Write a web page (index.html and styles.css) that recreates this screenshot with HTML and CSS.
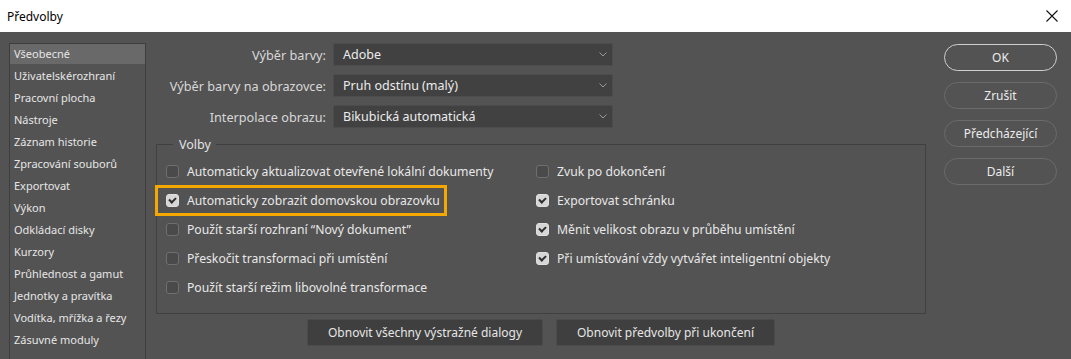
FILE: index.html
```html
<!DOCTYPE html>
<html lang="cs">
<head>
    <meta charset="UTF-8">
    <title>Předvolby</title>
    <link rel="stylesheet" href="styles.css">
</head>
<body>
    <header class="titlebar">
        <span class="title">Předvolby</span>
        <svg class="close" width="12" height="12" viewBox="0 0 12 12">
            <path d="M0.5 0.5 L11.5 11.5 M11.5 0.5 L0.5 11.5" stroke="#111" stroke-width="1.1" fill="none"/>
        </svg>
    </header>
    <div class="dialog">
        <!-- seznam sekci -->
        <ul class="sidebar">
            <li class="active">Všeobecné</li>
            <li>Uživatelskérozhraní</li>
            <li>Pracovní plocha</li>
            <li>Nástroje</li>
            <li>Záznam historie</li>
            <li>Zpracování souborů</li>
            <li>Exportovat</li>
            <li>Výkon</li>
            <li>Odkládací disky</li>
            <li>Kurzory</li>
            <li>Průhlednost a gamut</li>
            <li>Jednotky a pravítka</li>
            <li>Vodítka, mřížka a řezy</li>
            <li>Zásuvné moduly</li>
        </ul>

        <main class="content">
            <div class="form">
                <label class="form-label">Výběr barvy:</label>
                <div class="select"><span>Adobe</span><svg width="8" height="5" viewBox="0 0 8 5"><polyline points="0.5,0.5 4,4 7.5,0.5" stroke="#9a9a9a" fill="none"/></svg></div>
                <label class="form-label">Výběr barvy na obrazovce:</label>
                <div class="select"><span>Pruh odstínu (malý)</span><svg width="8" height="5" viewBox="0 0 8 5"><polyline points="0.5,0.5 4,4 7.5,0.5" stroke="#9a9a9a" fill="none"/></svg></div>
                <label class="form-label">Interpolace obrazu:</label>
                <div class="select"><span>Bikubická automatická</span><svg width="8" height="5" viewBox="0 0 8 5"><polyline points="0.5,0.5 4,4 7.5,0.5" stroke="#9a9a9a" fill="none"/></svg></div>
            </div>

            <fieldset class="options">
                <legend>Volby</legend>
                <div class="options-grid">
                    <div class="col">
                        <label class="check"><span class="box"></span>Automaticky aktualizovat otevřené lokální dokumenty</label>
                        <label class="check highlight"><span class="box checked"></span>Automaticky zobrazit domovskou obrazovku</label>
                        <label class="check"><span class="box"></span>Použít starší rozhraní “Nový dokument”</label>
                        <label class="check"><span class="box"></span>Přeskočit transformaci při umístění</label>
                        <label class="check"><span class="box"></span>Použít starší režim libovolné transformace</label>
                    </div>
                    <div class="col">
                        <label class="check"><span class="box"></span>Zvuk po dokončení</label>
                        <label class="check"><span class="box checked"></span>Exportovat schránku</label>
                        <label class="check"><span class="box checked"></span>Měnit velikost obrazu v průběhu umístění</label>
                        <label class="check"><span class="box checked"></span>Při umísťování vždy vytvářet inteligentní objekty</label>
                    </div>
                </div>
            </fieldset>

            <div class="reset-row">
                <button class="flat-button">Obnovit všechny výstražné dialogy</button>
                <button class="flat-button">Obnovit předvolby při ukončení</button>
            </div>
        </main>

        <aside class="actions">
            <button class="pill primary">OK</button>
            <button class="pill">Zrušit</button>
            <button class="pill">Předcházející</button>
            <button class="pill">Další</button>
        </aside>
    </div>
</body>
</html>
```

FILE: styles.css
```css
/* zakladni */
body {
    margin: 0;
    height: 100vh;
    overflow: hidden;
    display: flex;
    flex-direction: column;
    background-color: #535353;
    font-family: 'Noto Sans', 'Open Sans', sans-serif;
    color: #e2e2e2;
}
/* titulek okna */
.titlebar {
    height: 32px;
    flex: none;
    background-color: #fff;
    display: flex;
    align-items: center;
    justify-content: space-between;
    padding: 0 13px 0 7px;
    color: #000;
    font-size: 12px;
}
.close {
    margin-top: -1px;
}
/* telo dialogu */
.dialog {
    flex: 1;
    display: flex;
    padding: 11px 14px 0 9px;
    min-height: 0;
}
/* leva navigace */
.sidebar {
    list-style: none;
    margin: 0;
    padding: 0;
    width: 135px;
    border: 1px solid #3e3e3e;
    border-bottom: none;
    font-size: 11px;
    flex: none;
}
.sidebar li {
    height: 22px;
    line-height: 19px;
    padding-left: 4px;
    color: #e6e6e6;
}
.sidebar li.active {
    background-color: #696969;
    height: 20px;
    margin-bottom: 2px;
}
/* prostredni obsah */
.content {
    flex: 1;
    margin-left: 10px;
    display: flex;
    flex-direction: column;
}
.form {
    display: grid;
    grid-template-columns: 170px 280px;
    column-gap: 7px;
    row-gap: 8px;
    align-items: center;
    font-size: 12.7px;
}
.form-label {
    text-align: right;
    color: #d8d8d8;
}
.select {
    height: 21px;
    background-color: #414141;
    border: 1px solid #4c4c4c;
    border-radius: 2px;
    display: flex;
    align-items: center;
    justify-content: space-between;
    padding: 0 5px 0 9px;
    color: #ececec;
    font-size: 12.5px;
}
/* skupina voleb */
.options {
    margin: 8px 0 0 0;
    padding: 4px 0 11px 9px;
    border: 1px solid #404040;
    min-width: 0;
}
.options legend {
    margin-left: 7px;
    padding: 0 5px 0 6px;
    font-size: 12.5px;
    color: #e2e2e2;
}
.options-grid {
    display: grid;
    grid-template-columns: 370px 1fr;
}
.col {
    display: flex;
    flex-direction: column;
}
.check {
    height: 29px;
    display: flex;
    align-items: center;
    font-size: 12.2px;
    color: #e8e8e8;
    white-space: nowrap;
}
.box {
    width: 11px;
    height: 11px;
    border: 1px solid #6f6f6f;
    border-radius: 3px;
    background-color: #4a4a4a;
    margin-right: 8px;
    flex: none;
    display: flex;
    align-items: center;
    justify-content: center;
}
.box.checked {
    background-color: #d6d6d6;
    border-color: #e0e0e0;
}
.box.checked::after {
    content: "";
    width: 5px;
    height: 3px;
    border-left: 2px solid #2e2e2e;
    border-bottom: 2px solid #2e2e2e;
    transform: rotate(-45deg);
    margin-top: -2px;
}
.check.highlight {
    align-self: flex-start;
    height: 25px;
    margin: -1px 0 -1px -11px;
    padding: 0 4px 0 8px;
    border: 3px solid #f5a900;
}
/* spodni tlacitka */
.reset-row {
    display: flex;
    justify-content: center;
    gap: 13px;
    margin-top: 5px;
}
.flat-button {
    height: 27px;
    padding: 0 20px;
    background-color: #3f3f3f;
    border: 1px solid #4b4b4b;
    border-radius: 2px;
    color: #e6e6e6;
    font-family: inherit;
    font-size: 12px;
}
/* prava tlacitka */
.actions {
    width: 113px;
    margin-left: 18px;
    display: flex;
    flex-direction: column;
    gap: 11px;
    padding-top: 1px;
    flex: none;
}
.pill {
    height: 27px;
    border-radius: 14px;
    border: 1px solid #6b6b6b;
    background-color: transparent;
    color: #ececec;
    font-family: inherit;
    font-size: 12px;
}
.pill.primary {
    border-color: #cfcfcf;
}
```
